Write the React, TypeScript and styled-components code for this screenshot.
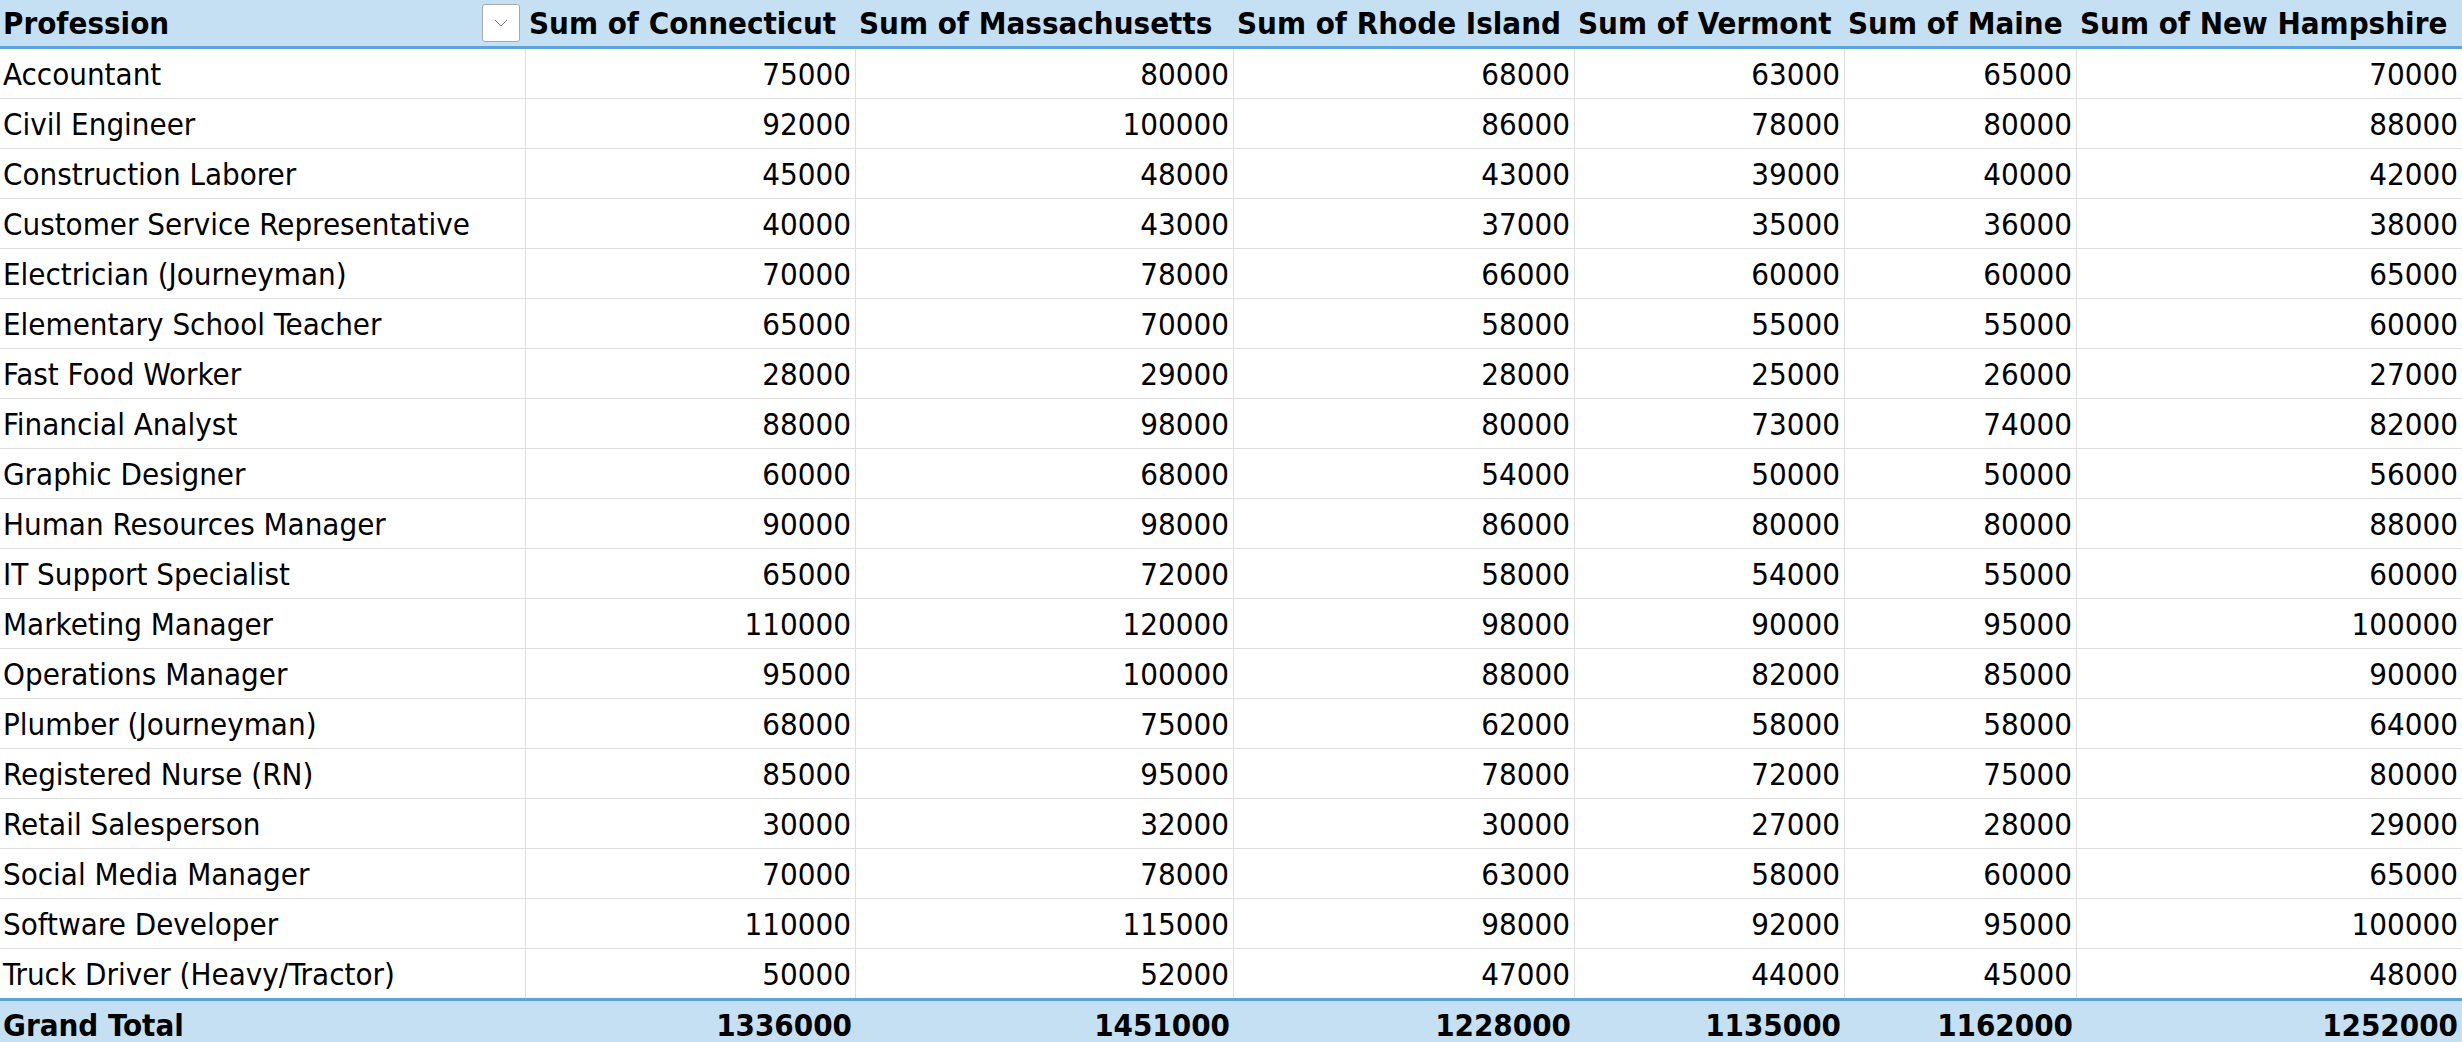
import styled, { createGlobalStyle } from "styled-components";

const GlobalStyle = createGlobalStyle`
  body { margin: 0; background: #fff; overflow: hidden; }
  * { box-sizing: border-box; }
`;

const states = ["Connecticut", "Massachusetts", "Rhode Island", "Vermont", "Maine", "New Hampshire"];
const widths = [526, 330, 378, 341, 270, 232, 385];

const rows: [string, number[]][] = [
  ["Accountant", [75000, 80000, 68000, 63000, 65000, 70000]],
  ["Civil Engineer", [92000, 100000, 86000, 78000, 80000, 88000]],
  ["Construction Laborer", [45000, 48000, 43000, 39000, 40000, 42000]],
  ["Customer Service Representative", [40000, 43000, 37000, 35000, 36000, 38000]],
  ["Electrician (Journeyman)", [70000, 78000, 66000, 60000, 60000, 65000]],
  ["Elementary School Teacher", [65000, 70000, 58000, 55000, 55000, 60000]],
  ["Fast Food Worker", [28000, 29000, 28000, 25000, 26000, 27000]],
  ["Financial Analyst", [88000, 98000, 80000, 73000, 74000, 82000]],
  ["Graphic Designer", [60000, 68000, 54000, 50000, 50000, 56000]],
  ["Human Resources Manager", [90000, 98000, 86000, 80000, 80000, 88000]],
  ["IT Support Specialist", [65000, 72000, 58000, 54000, 55000, 60000]],
  ["Marketing Manager", [110000, 120000, 98000, 90000, 95000, 100000]],
  ["Operations Manager", [95000, 100000, 88000, 82000, 85000, 90000]],
  ["Plumber (Journeyman)", [68000, 75000, 62000, 58000, 58000, 64000]],
  ["Registered Nurse (RN)", [85000, 95000, 78000, 72000, 75000, 80000]],
  ["Retail Salesperson", [30000, 32000, 30000, 27000, 28000, 29000]],
  ["Social Media Manager", [70000, 78000, 63000, 58000, 60000, 65000]],
  ["Software Developer", [110000, 115000, 98000, 92000, 95000, 100000]],
  ["Truck Driver (Heavy/Tractor)", [50000, 52000, 47000, 44000, 45000, 48000]],
];

const totals = states.map((_, i) => rows.reduce((s, r) => s + r[1][i], 0));

const Sheet = styled.div`
  width: 2462px;
  height: 1042px;
  overflow: hidden;
  font-family: "Liberation Sans Narrow", "DejaVu Sans Condensed", "Roboto", sans-serif;
  font-size: 31px;
  color: #000;
`;

const Row = styled.div<{ $kind?: "head" | "total" }>`
  display: grid;
  grid-template-columns: ${widths.map((w) => w + "px").join(" ")};
  height: ${(p) => (p.$kind === "head" ? "49px" : p.$kind === "total" ? "50px" : "50px")};
  background: ${(p) => (p.$kind ? "#c6e0f3" : "#fff")};
  font-weight: ${(p) => (p.$kind ? 700 : 400)};
  border-bottom: ${(p) => (p.$kind === "head" ? "3px solid #5ba3dd" : p.$kind === "total" ? "none" : "1px solid #dedede")};
  border-top: ${(p) => (p.$kind === "total" ? "3px solid #5ba3dd" : "none")};
  margin-top: ${(p) => (p.$kind === "total" ? "-1px" : "0")};
`;

const Cell = styled.div<{ $num?: boolean; $lined?: boolean }>`
  display: flex;
  align-items: center;
  justify-content: ${(p) => (p.$num ? "flex-end" : "flex-start")};
  padding: 0 4px 0 3px;
  white-space: nowrap;
  overflow: hidden;
  border-right: ${(p) => (p.$lined ? "1px solid #dedede" : "none")};
`;

const HeadCell = styled(Cell)`
  justify-content: space-between;
  padding-right: 6px;
`;

const FilterButton = styled.div`
  width: 38px;
  height: 38px;
  border: 1px solid #a8a8a8;
  border-radius: 3px;
  background: #fff;
  display: flex;
  align-items: center;
  justify-content: center;
`;

export default function App() {
  return (
    <Sheet>
      <GlobalStyle />
      <Row $kind="head">
        <HeadCell>
          Profession
          <FilterButton>
            <svg width="14" height="10" viewBox="0 0 14 10">
              <path d="M1 2 L7 8 L13 2" fill="none" stroke="#777" strokeWidth="1" />
            </svg>
          </FilterButton>
        </HeadCell>
        {states.map((s) => (
          <Cell key={s}>Sum of {s}</Cell>
        ))}
      </Row>
      {rows.map(([name, vals]) => (
        <Row key={name}>
          <Cell $lined>{name}</Cell>
          {vals.map((v, i) => (
            <Cell key={i} $num $lined={i < 5}>
              {v}
            </Cell>
          ))}
        </Row>
      ))}
      <Row $kind="total">
        <Cell>Grand Total</Cell>
        {totals.map((t, i) => (
          <Cell key={i} $num>
            {t}
          </Cell>
        ))}
      </Row>
    </Sheet>
  );
}
